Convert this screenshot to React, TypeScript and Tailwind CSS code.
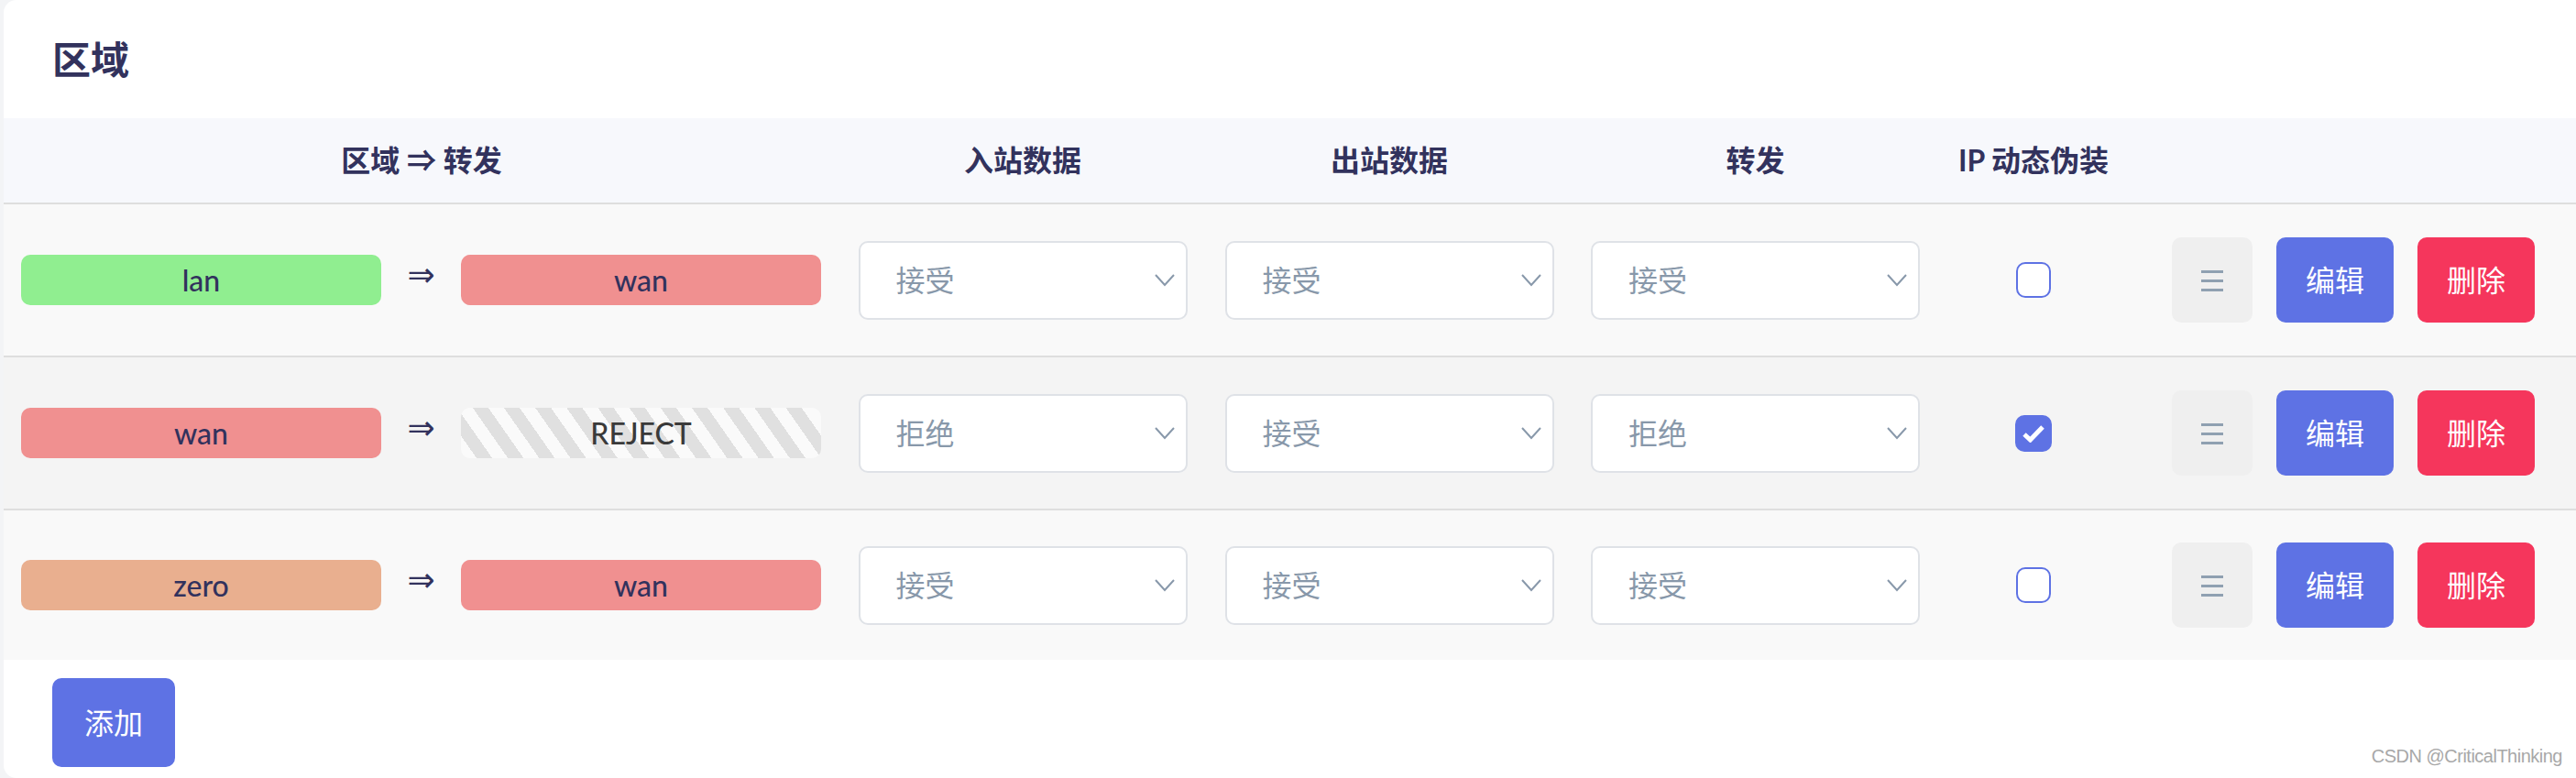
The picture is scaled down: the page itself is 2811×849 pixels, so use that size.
import React from 'react';

type Zone = { name: string; color: string };

const zones: Record<string, Zone> = {
  lan: { name: 'lan', color: 'bg-[#90ee90]' },
  wan: { name: 'wan', color: 'bg-[#f09090]' },
  zero: { name: 'zero', color: 'bg-[#e9af8f]' },
};

interface ZoneRow {
  src: string;
  dest: string | null;
  input: string;
  output: string;
  forward: string;
  masq: boolean;
}

const rows: ZoneRow[] = [
  { src: 'lan', dest: 'wan', input: '接受', output: '接受', forward: '接受', masq: false },
  { src: 'wan', dest: null, input: '拒绝', output: '接受', forward: '拒绝', masq: true },
  { src: 'zero', dest: 'wan', input: '接受', output: '接受', forward: '接受', masq: false },
];

const cjk = "font-['Lato','Noto_Sans_CJK_SC',sans-serif]";

function ZoneBadge({ zone }: { zone: string }) {
  const z = zones[zone];
  return (
    <div className={`w-[393px] h-[55px] rounded-[10px] flex items-center justify-center text-[32px] font-medium text-[#32325d] ${z.color}`}>
      {z.name}
    </div>
  );
}

function RejectBadge() {
  return (
    <div className="w-[393px] h-[55px] rounded-[10px] flex items-center justify-center text-[32px] font-medium text-[#3a3a3a] bg-[repeating-linear-gradient(55deg,#fafafa_0px,#fafafa_14px,#e0e0e0_14px,#e0e0e0_28px)]">
      REJECT
    </div>
  );
}

function Select({ value }: { value: string }) {
  return (
    <div className="w-[359px] h-[86px] mx-auto bg-white border-2 border-[#dfe2e7] rounded-[10px] flex items-center justify-between pl-[39px] pr-[12px]">
      <span className="text-[32px] text-[#8898aa]">{value}</span>
      <svg width="22" height="14" viewBox="0 0 22 14" fill="none">
        <polyline points="1,1 11,12 21,1" stroke="#8898aa" strokeWidth="2" />
      </svg>
    </div>
  );
}

function Checkbox({ checked }: { checked: boolean }) {
  if (checked) {
    return (
      <div className="w-[40px] h-[40px] rounded-[10px] bg-[#5e72e4] flex items-center justify-center">
        <svg width="24" height="20" viewBox="0 0 24 20">
          <path d="M2 11 L8.5 17 L22 3" stroke="white" strokeWidth="5" fill="none" strokeLinejoin="miter" />
        </svg>
      </div>
    );
  }
  return <div className="w-[38px] h-[39px] rounded-[10px] bg-white border-2 border-[#5e72e4]" />;
}

function Actions() {
  return (
    <div className="flex items-center justify-end gap-[26px] pr-[45px]">
      <button className="w-[88px] h-[93px] rounded-[10px] bg-[#efefef] flex items-center justify-center">
        <svg width="24" height="24" viewBox="0 0 24 24">
          <rect x="0" y="1" width="24" height="3" fill="#8fa0b1" />
          <rect x="0" y="11" width="24" height="3" fill="#8fa0b1" />
          <rect x="0" y="21" width="24" height="3" fill="#8fa0b1" />
        </svg>
      </button>
      <button className="w-[128px] h-[93px] rounded-[10px] bg-[#5e72e4] text-white text-[32px]">编辑</button>
      <button className="w-[128px] h-[93px] rounded-[10px] bg-[#f5365c] text-white text-[32px]">删除</button>
    </div>
  );
}

export default function App() {
  return (
    <div className={`w-[2811px] h-[849px] bg-[#f3f4f6] pl-[4px] relative ${cjk}`}>
      <div className="h-full bg-white rounded-l-[14px] flex flex-col overflow-hidden">
        <div className="h-[129px] flex items-center pl-[53px] shrink-0">
          <h2 className="text-[42px] font-bold text-[#32325d] leading-none">区域</h2>
        </div>

        <div className="grid grid-cols-[912px_400px_400px_399px_208px_1fr] h-[94px] bg-[#f7f8fc] border-b-2 border-[#dedede] items-center text-[32px] font-bold text-[#32325d] shrink-0">
          <div className="text-center">区域 ⇒ 转发</div>
          <div className="text-center">入站数据</div>
          <div className="text-center">出站数据</div>
          <div className="text-center">转发</div>
          <div className="text-center">IP 动态伪装</div>
          <div />
        </div>

        {rows.map((r, i) => (
          <div
            key={i}
            className={`grid grid-cols-[912px_400px_400px_399px_208px_1fr] items-center shrink-0 ${
              i === 1 ? 'bg-[#f4f4f4]' : 'bg-[#f9f9f9]'
            } ${i < rows.length - 1 ? 'h-[167px] border-b-2 border-[#dedede]' : 'h-[163px]'}`}
          >
            <div className="flex items-center pl-[19px]">
              <ZoneBadge zone={r.src} />
              <div className="w-[87px] text-center text-[36px] leading-none text-[#32325d] mb-[12px] font-['DejaVu_Sans',sans-serif]">⇒</div>
              {r.dest ? <ZoneBadge zone={r.dest} /> : <RejectBadge />}
            </div>
            <Select value={r.input} />
            <Select value={r.output} />
            <Select value={r.forward} />
            <div className="flex justify-center">
              <Checkbox checked={r.masq} />
            </div>
            <Actions />
          </div>
        ))}

        <div className="pt-[20px] pl-[53px]">
          <button className="w-[134px] h-[97px] rounded-[10px] bg-[#5e72e4] text-white text-[32px]">添加</button>
        </div>
      </div>
      <div className="absolute right-[15px] bottom-[9px] text-[20px] text-[#a8a8a8] font-['Liberation_Sans',sans-serif] tracking-[-0.5px]">
        CSDN @CriticalThinking
      </div>
    </div>
  );
}
